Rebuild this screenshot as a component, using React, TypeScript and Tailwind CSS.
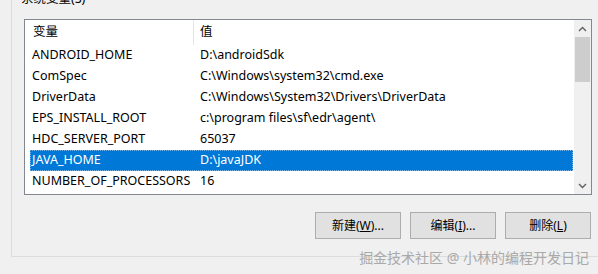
import React from 'react';

const rows: [string, string][] = [
  ['ANDROID_HOME', 'D:\\androidSdk'],
  ['ComSpec', 'C:\\Windows\\system32\\cmd.exe'],
  ['DriverData', 'C:\\Windows\\System32\\Drivers\\DriverData'],
  ['EPS_INSTALL_ROOT', 'c:\\program files\\sf\\edr\\agent\\'],
  ['HDC_SERVER_PORT', '65037'],
  ['JAVA_HOME', 'D:\\javaJDK'],
  ['NUMBER_OF_PROCESSORS', '16'],
];

const font = { fontFamily: '"Noto Sans", "Noto Sans CJK SC", sans-serif' };

const WinButton = ({ children }: { children: React.ReactNode }) => (
  <button className="w-[86px] h-[27px] bg-[#e1e1e1] border border-[#adadad] text-[12px] text-black flex items-center justify-center">
    {children}
  </button>
);

const App: React.FC = () => {
  return (
    <div
      className="w-[598px] h-[274px] bg-[#f0f0f0] overflow-hidden relative text-[12.5px] text-black"
      style={font}
    >
      {/* group box */}
      <div className="ml-[11px] -mt-[8px] pt-[27px] h-[265px] border-l border-b border-[#dcdcdc] relative">
        <div className="absolute left-[8px] top-[-1px] px-[1px] bg-[#f0f0f0] leading-[16px]">系统变量(S)</div>

        {/* list view */}
        <div className="ml-[12px] w-[568px] h-[176px] border border-[#828790] bg-white flex">
          <div className="flex-1 flex flex-col">
            <div className="h-[25px] flex items-center">
              <div className="w-[169px] h-full pl-[8px] flex items-center border-r border-[#e5e5e5]">变量</div>
              <div className="pl-[6px]">值</div>
            </div>
            {rows.map(([name, value]) => {
              const selected = name === 'JAVA_HOME';
              return (
                <div key={name} className="h-[21px] pl-[5px] pr-[1px]">
                  <div
                    className={
                      selected
                        ? 'h-full flex items-center bg-[#0078d7] text-white outline-1 outline-dotted outline-[#7fb6e6] -outline-offset-1'
                        : 'h-full flex items-center'
                    }
                  >
                    <div className="w-[170px] pl-[2px] whitespace-nowrap">{name}</div>
                    <div className="whitespace-nowrap">{value}</div>
                  </div>
                </div>
              );
            })}
          </div>

          {/* scrollbar */}
          <div className="w-[17px] bg-[#f0f0f0] flex flex-col">
            <div className="h-[17px] flex items-center justify-center">
              <svg width="9" height="6" viewBox="0 0 9 6">
                <path d="M1 5 L4.5 1.5 L8 5" stroke="#606060" strokeWidth="1.4" fill="none" />
              </svg>
            </div>
            <div className="h-[45px] mx-[1px] bg-[#cdcdcd]" />
            <div className="flex-1" />
            <div className="h-[17px] flex items-center justify-center">
              <svg width="9" height="6" viewBox="0 0 9 6">
                <path d="M1 1 L4.5 4.5 L8 1" stroke="#606060" strokeWidth="1.4" fill="none" />
              </svg>
            </div>
          </div>
        </div>

        {/* buttons */}
        <div className="mt-[17px] ml-[303px] flex gap-[9px]">
          <WinButton>新建(<span className="underline">W</span>)...</WinButton>
          <WinButton>编辑(<span className="underline">I</span>)...</WinButton>
          <WinButton>删除(<span className="underline">L</span>)</WinButton>
        </div>
      </div>

      {/* watermark */}
      <div className="absolute right-[9px] top-[249px] text-[14px] leading-[18px] text-[#a9a9a9] whitespace-nowrap">
        掘金技术社区 @ 小林的编程开发日记
      </div>
    </div>
  );
};

export default App;
